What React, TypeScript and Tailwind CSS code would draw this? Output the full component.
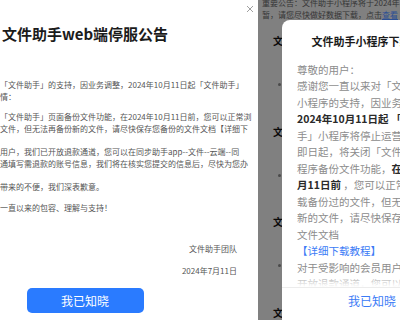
import type { ReactNode } from "react";

const cjk = "font-['Noto_Sans_CJK_SC','Noto_Sans',sans-serif]";

// Left notice: only the right part of a wide modal is in view
const leftParagraphs: { lines: string[]; gap: string }[] = [
  {
    gap: "mt-0",
    lines: ["「文件助手」的支持，因业务调整，2024年10月11日起「文件助手」", "情："],
  },
  {
    gap: "mt-[7px]",
    lines: [
      "「文件助手」页面备份文件功能，在2024年10月11日前，您可以正常浏",
      "文件，但无法再备份新的文件，请尽快保存您备份的文件文档【详细下",
    ],
  },
  {
    gap: "mt-[10px]",
    lines: [
      "用户，我们已开放退款通道，您可以在同步助手app--文件--云端--同",
      "通填写需退款的账号信息，我们将在核实您提交的信息后，尽快为您办",
    ],
  },
  { gap: "mt-[10px]", lines: ["带来的不便，我们深表歉意。"] },
  { gap: "mt-[8.5px]", lines: ["一直以来的包容、理解与支持！"] },
];

function LeftNotice() {
  return (
    <div className="relative h-full w-[258px] shrink-0 overflow-hidden bg-white">
      <button
        type="button"
        aria-label="关闭"
        className="absolute right-[4px] top-[5px] text-[#a0a0a0]"
      >
        <svg width="8" height="8" viewBox="0 0 8 8" fill="none">
          <path d="M1 1l6 6M7 1L1 7" stroke="currentColor" strokeWidth="1" />
        </svg>
      </button>

      <div className="-ml-[88px] flex w-[346px] flex-col">
        <h1 className="mt-[24px] text-center text-[15px] font-bold leading-[20px] text-[#1b1b1b]">
          文件助手web端停服公告
        </h1>

        <div className="mt-[34.75px] pl-[88px] pr-[21px] text-[8px] leading-[12.5px] text-[#555]">
          {leftParagraphs.map((p, i) => (
            <div key={i} className={p.gap}>
              {p.lines.map((l, j) => (
                <div key={j} className="whitespace-nowrap">
                  {l}
                </div>
              ))}
            </div>
          ))}

          <div className="mt-[28.5px] text-right">文件助手团队</div>
          <div className="mt-[9.5px] text-right">2024年7月11日</div>
        </div>

        <button
          type="button"
          className="mx-auto mt-[10.75px] h-[25px] w-[117px] rounded-[5px] bg-[#2a7bff] text-[12px] text-white"
        >
          我已知晓
        </button>
      </div>
    </div>
  );
}

// Right notice: page under a dark overlay, second modal on top
const rightLines: ReactNode[] = [
  "尊敬的用户：",
  "感谢您一直以来对「文件助手」",
  "小程序的支持，因业务调整，",
  <b className="font-bold text-[#2a2a2a]">2024年10月11日起 「文件助</b>,
  "手」小程序将停止运营。",
  "即日起，将关闭「文件助手」小",
  <>
    程序备份文件功能，<b className="font-bold text-[#2a2a2a]">在2024年10</b>
  </>,
  <>
    <b className="font-bold text-[#2a2a2a]">月11日前</b> ，您可以正常下
  </>,
  "载备份过的文件，但无法再备份",
  "新的文件，请尽快保存您备份的",
  "文件文档",
  <span className="text-[#3b7bf6]">【详细下载教程】</span>,
  "对于受影响的会员用户，我们已",
  "开放退款通道，您可以在同步",
];

function RightNotice() {
  return (
    <div className="relative h-full flex-1 overflow-hidden bg-[#808080]">
      <div className="whitespace-nowrap pl-[4px] text-[8px] leading-[12px] text-[#353535]">
        <div className="-mt-[3px]">重要公告：文件助手小程序将于2024年10月11日</div>
        <div>
          暂，请您尽快做好数据下载，点击<span className="text-[#2c4f94] underline">查看</span>
        </div>
      </div>

      <div className="mt-[14px] flex flex-col pl-[15px]">
        {[0, 1, 2, 3].map((i) => (
          <div key={i} className="flex h-[90.5px] flex-col">
            <span className="text-[10px] font-bold leading-[12px] text-[#0a0a0a]">文</span>
            <span className="ml-[5px] mt-[36px] h-[3px] w-[3px] rounded-full bg-[#4a4a4a]" />
          </div>
        ))}
      </div>

      <div className="absolute left-[24px] top-[20px] flex h-[320px] w-[180px] flex-col rounded-tl-[8px] bg-white">
        <h2 className="mt-[13px] whitespace-nowrap text-center text-[11px] font-bold leading-[16px] text-[#1b1b1b]">
          文件助手小程序下线公告
        </h2>

        <div className="relative mt-[12.75px] h-[225.25px] overflow-hidden px-[15px] text-[10.5px] leading-[16.5px] text-[#8c8c8c]">
          {rightLines.map((l, i) => (
            <div key={i} className="whitespace-nowrap">
              {l}
            </div>
          ))}
          <div className="absolute inset-x-0 bottom-0 h-[14px] bg-gradient-to-b from-white/0 to-white" />
        </div>

        <div className="border-t border-[#ececec] pt-[5px] text-center text-[12px] leading-[16px] text-[#3b7bf6]">
          我已知晓
        </div>
      </div>
    </div>
  );
}

export default function App() {
  return (
    <div className={`flex h-[320px] w-[400px] overflow-hidden bg-white ${cjk}`}>
      <LeftNotice />
      <RightNotice />
    </div>
  );
}
